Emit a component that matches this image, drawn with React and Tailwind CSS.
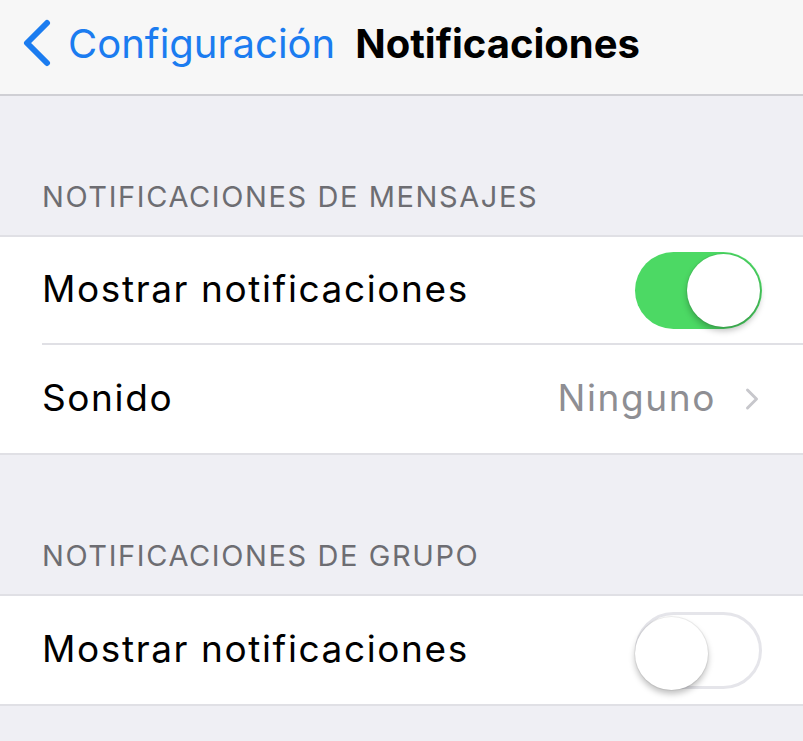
import { ChevronRight } from "lucide-react";

function Toggle({ on }) {
  return (
    <div
      className={`relative w-[127px] h-[77px] rounded-full ${
        on ? "bg-[#4cd964]" : "bg-white border-[3px] border-[#e5e5ea]"
      }`}
    >
      <div
        className={`absolute top-[2px] w-[73px] h-[73px] rounded-full bg-white shadow-[0_4px_6px_rgba(0,0,0,0.25),0_0_0_1px_rgba(0,0,0,0.06)] ${
          on ? "right-[2px]" : "-left-[3px] -top-[1px]"
        }`}
      />
    </div>
  );
}

function SectionHeader({ children }) {
  return (
    <div className="h-[139px] flex items-end pb-[17px] pl-[42px] text-[29px] tracking-[1.6px] text-[#6d6d72]">
      {children}
    </div>
  );
}

function Row({ children, right, last }) {
  return (
    <div className="pl-[42px]">
      <div
        className={`h-[108px] flex items-center justify-between pr-[41px] ${
          last ? "" : "border-b-2 border-[#e0e0e5]"
        }`}
      >
        <span className="mb-[2px] text-[37px] tracking-[1.6px] text-black">{children}</span>
        {right}
      </div>
    </div>
  );
}

export default function App() {
  return (
    <div
      className="w-[803px] h-[741px] bg-[#efeff4] overflow-hidden"
      style={{ fontFamily: 'Inter, "Liberation Sans", Arial, sans-serif' }}
    >
      <div className="h-[96px] pb-[6px] bg-[#f7f7f7] border-b-2 border-[#cfcfd4] flex items-center">
        <svg className="ml-[20px]" width="34" height="50" viewBox="0 0 34 50" fill="none">
          <polyline
            points="27,4 7,24 27,44"
            stroke="#1b7cf0"
            strokeWidth="6"
            strokeLinecap="round"
            strokeLinejoin="round"
          />
        </svg>
        <span className="ml-[14px] text-[40px] text-[#1b7cf0]">Configuración</span>
        <span className="ml-[20px] text-[40px] font-bold text-black">Notificaciones</span>
      </div>

      <SectionHeader>NOTIFICACIONES DE MENSAJES</SectionHeader>
      <div className="bg-white border-y-2 border-[#e0e0e5]">
        <Row right={<Toggle on />}>Mostrar notificaciones</Row>
        <Row
          last
          right={
            <div className="flex items-center gap-[18px]">
              <span className="mb-[2px] text-[37px] tracking-[1.6px] text-[#8e8e93]">Ninguno</span>
              <ChevronRight className="w-[36px] h-[36px] text-[#c7c7cc] -mr-[8px]" strokeWidth={2} />
            </div>
          }
        >
          Sonido
        </Row>
      </div>

      <SectionHeader>NOTIFICACIONES DE GRUPO</SectionHeader>
      <div className="bg-white border-y-2 border-[#e0e0e5]">
        <Row last right={<Toggle />}>Mostrar notificaciones</Row>
      </div>
    </div>
  );
}
